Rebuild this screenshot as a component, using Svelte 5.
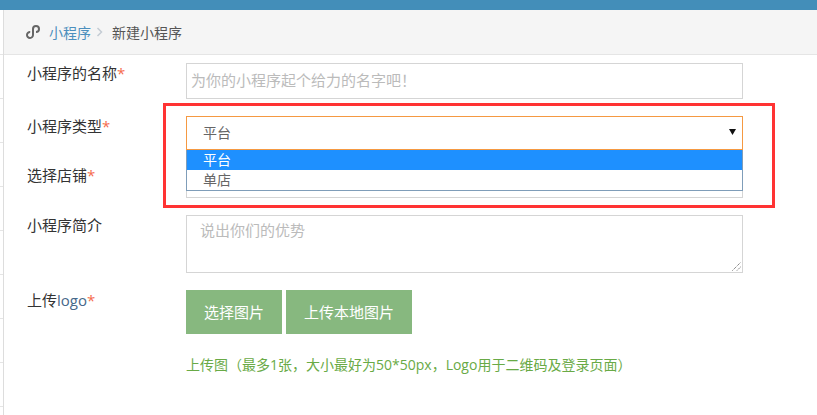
<script>
	const options = ["平台", "单店"];
	const ticks = Array(9);
</script>

<div class="page">
	<div class="topbar"></div>
	<div class="main">
		<aside class="rail">
			{#each ticks as _}
				<span></span>
			{/each}
		</aside>
		<div class="content">
			<nav class="crumbs">
				<svg class="crumb-icon" width="14" height="14" viewBox="0 0 14 14" fill="none" stroke="#666" stroke-width="2">
					<path d="M4.200 7A3 3 0 1 0 7 10V4A3 3 0 1 1 10 7" />
				</svg>
				<a href="#top">小程序</a>
				<svg class="chevron" width="8" height="10" viewBox="0 0 8 10" fill="none" stroke="#c4ccd4" stroke-width="1.500">
					<path d="M1.500 1l4 4-4 4" />
				</svg>
				<span>新建小程序</span>
			</nav>

			<form class="form">
				<div class="row name">
					<label>小程序的名称<i>*</i></label>
					<div class="input ph">为你的小程序起个给力的名字吧！</div>
				</div>

				<div class="row type">
					<label>小程序类型<i>*</i></label>
					<div class="select">
						<span>平台</span>
						<svg width="7" height="6" viewBox="0 0 7 6"><path d="M0 0h7L3.500 6z" fill="#111" /></svg>
					</div>
				</div>

				<div class="row shop">
					<label>选择店铺<i>*</i></label>
					<div class="input"></div>
					<ul class="options">
						{#each options as opt, i}
							<li class:active={i === 0}>{opt}</li>
						{/each}
					</ul>
				</div>

				<div class="row intro">
					<label>小程序简介</label>
					<div class="textarea ph">
						说出你们的优势
						<svg class="grip" width="9" height="9" viewBox="0 0 9 9" stroke="#555" stroke-width="1" stroke-dasharray="1 1">
							<path d="M0.500 8.500l8-8M5 8.500l3.500-3.500" />
						</svg>
					</div>
				</div>

				<div class="row logo">
					<label>上传<b>logo</b><i>*</i></label>
					<div>
						<div class="buttons">
							<button type="button">选择图片</button>
							<button type="button">上传本地图片</button>
						</div>
						<p class="hint">上传图（最多1张，大小最好为50*50px，Logo用于二维码及登录页面）</p>
					</div>
				</div>

				<div class="callout"></div>
			</form>
		</div>
	</div>
</div>

<style>
	:global(body) {
		margin: 0;
		background: #fff;
	}
	.page {
		width: 817px;
		height: 415px;
		overflow: hidden;
		font-family: "Open Sans", "Noto Sans CJK SC", sans-serif;
		font-size: 15px;
		color: #333;
	}
	.topbar {
		height: 10px;
		background: #438eb9;
	}
	.main {
		display: flex;
		height: 405px;
	}
	.rail {
		width: 3px;
		flex: none;
		border-right: 1px solid #ddd;
	}
	.rail span {
		display: block;
		height: 43px;
		border-bottom: 1px solid #e5e5e5;
	}
	.rail span:first-child {
		height: 44px;
	}
	.content {
		flex: 1;
		min-width: 0;
	}
	.crumbs {
		display: flex;
		align-items: center;
		box-sizing: border-box;
		height: 45px;
		padding: 0 0 1px 22px;
		background: #f5f5f5;
		border-bottom: 1px solid #e5e5e5;
		color: #555;
		font-size: 14px;
	}
	.crumbs a {
		margin-left: 9px;
		color: #4c8fbd;
		text-decoration: none;
	}
	.chevron {
		margin: 0 8px 0 5px;
	}
	.form {
		position: relative;
		padding: 8px 0 0 23px;
	}
	.row {
		display: flex;
		position: relative;
	}
	.row label {
		width: 159px;
		flex: none;
		line-height: 20px;
	}
	.row label i {
		font-style: normal;
		color: #f56c4c;
	}
	.row label b {
		font-weight: 400;
		color: #46688a;
	}
	.input,
	.select,
	.textarea {
		box-sizing: border-box;
		width: 557px;
		background: #fff;
		border: 1px solid #d5d5d5;
	}
	.ph {
		color: #bbb;
	}
	.name .input {
		height: 36px;
		line-height: 33px;
		padding-left: 4px;
	}
	.type {
		margin-top: 17px;
	}
	.select {
		display: flex;
		align-items: center;
		justify-content: space-between;
		height: 34px;
		padding: 0 6px 2px 16px;
		border-color: #f59942;
		color: #666;
		font-size: 14px;
	}
	.shop {
		margin-top: 15px;
	}
	.shop .input {
		height: 33px;
	}
	.options {
		position: absolute;
		left: 159px;
		top: -15px;
		width: 557px;
		box-sizing: border-box;
		margin: 0;
		padding: 0;
		list-style: none;
		background: #fff;
		border: 1px solid #7f9db9;
		border-top: 0;
		color: #666;
		font-size: 14px;
	}
	.options li {
		height: 20px;
		line-height: 20px;
		padding-left: 16px;
	}
	.options li.active {
		background: #1e90ff;
		color: #fff;
	}
	.intro {
		margin-top: 17px;
	}
	.textarea {
		position: relative;
		height: 58px;
		padding: 4px 13px;
		line-height: 20px;
	}
	.grip {
		position: absolute;
		right: 1px;
		bottom: 1px;
	}
	.logo {
		margin-top: 17px;
	}
	.buttons {
		display: flex;
		gap: 4px;
	}
	.buttons button {
		height: 44px;
		padding: 0 18px 1px;
		border: 0;
		background: #87b87f;
		color: #fff;
		font: inherit;
	}
	.hint {
		margin: 21px 0 0;
		color: #69aa46;
		font-size: 14px;
		line-height: 20px;
	}
	.callout {
		position: absolute;
		left: 159px;
		top: 48px;
		width: 612px;
		height: 105px;
		box-sizing: border-box;
		border: 3px solid #ff3333;
		pointer-events: none;
	}
</style>
